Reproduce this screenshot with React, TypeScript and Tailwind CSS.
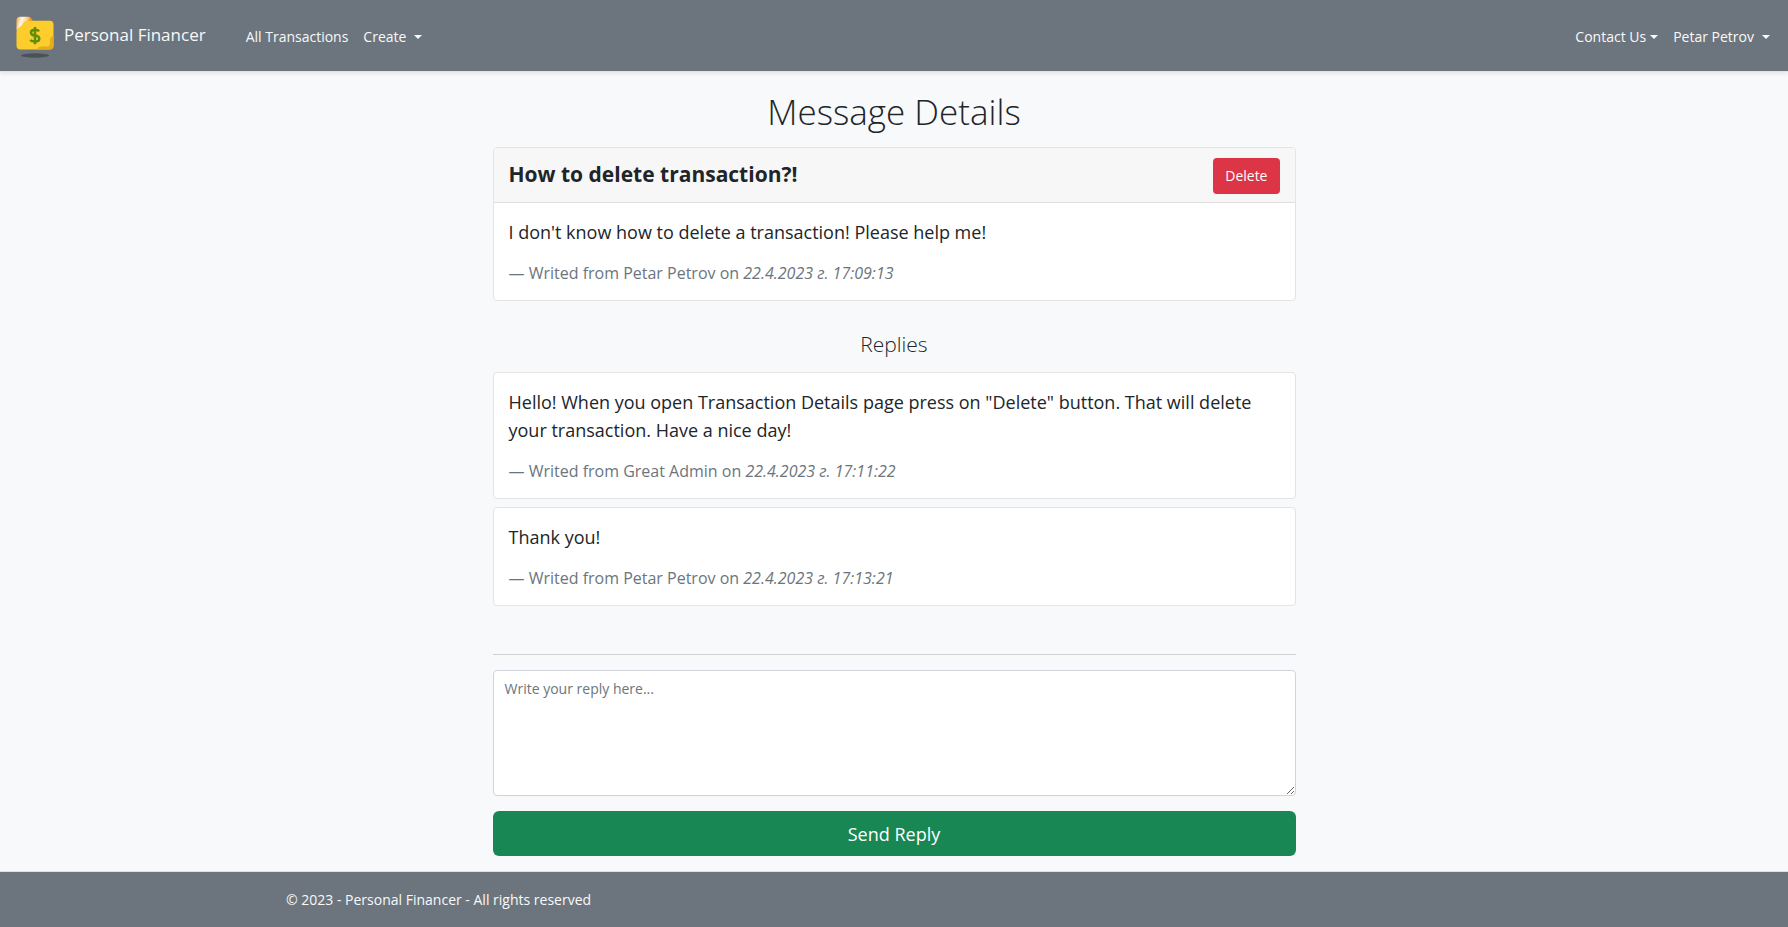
type Message = {
  id: number;
  content: string;
  author: string;
  createdOn: string;
};

const question: Message = {
  id: 1,
  content: "I don't know how to delete a transaction! Please help me!",
  author: 'Petar Petrov',
  createdOn: '22.4.2023 г. 17:09:13',
};

const replies: Message[] = [
  {
    id: 2,
    content:
      'Hello! When you open Transaction Details page press on "Delete" button. That will delete your transaction. Have a nice day!',
    author: 'Great Admin',
    createdOn: '22.4.2023 г. 17:11:22',
  },
  {
    id: 3,
    content: 'Thank you!',
    author: 'Petar Petrov',
    createdOn: '22.4.2023 г. 17:13:21',
  },
];

function Logo() {
  return (
    <svg className="h-[42px] w-[38px]" viewBox="0 0 38 42" aria-hidden="true">
      <defs>
        <linearGradient id="tab" x1="0" y1="0.1" x2="1" y2="0.3">
          <stop offset="0" stopColor="#fba43a" />
          <stop offset="0.3" stopColor="#fff6e6" />
          <stop offset="0.55" stopColor="#fdd9a4" />
          <stop offset="0.8" stopColor="#f98a1f" />
        </linearGradient>
      </defs>
      <ellipse cx="19" cy="39.500" rx="14" ry="2.200" fill="#4b5157" />
      <path d="M.5 4.500Q.5 .8 4 .8h8.200Q14.500 .8 15.800 3L18 8v6H.5Z" fill="url(#tab)" />
      <path
        d="M4.500 10.500Q6 9.500 7 7.500T11 4.800H34Q37.500 4.800 37.500 8.300V29.500Q37.500 33.500 33.500 33.500H4.500Q.5 33.500 .5 29.500V15Q1.500 11.500 4.500 10.500Z"
        fill="#fdcd2c"
      />
      <path d="M37.500 20V29.500Q37.500 33.500 33.500 33.500H21Q22 30.500 26 30.500H31Q34 30.500 34 27V24Q34 20.500 37.500 20Z" fill="#e6ac1c" />
      <path
        d="M23 15.300Q22 13.700 19 13.700Q15 13.700 15 16.500T19 19.500Q23.300 20 23.300 22.800T19 25.600Q15.500 25.600 14.300 24M19 11V28.300"
        fill="none"
        stroke="#5f8d09"
        strokeWidth="2.500"
      />
    </svg>
  );
}

function Caret() {
  return (
    <svg className="h-2 w-2" viewBox="0 0 8 8" aria-hidden="true">
      <path d="M0 2h8L4 6z" fill="currentColor" />
    </svg>
  );
}

function MessageBody({ message }: { message: Message }) {
  return (
    <blockquote className="p-[15px]">
      <p className="mb-[15px] text-lg leading-7">{message.content}</p>
      <footer className="text-base leading-6 text-[#6c757d]">
        — Writed from {message.author} on <cite>{message.createdOn}</cite>
      </footer>
    </blockquote>
  );
}

export default function App() {
  return (
    <div className="flex min-h-screen flex-col bg-[#f8f9fa] font-['Open_Sans','Noto_Sans',sans-serif] text-sm text-[#212529]">
      <nav className="flex items-center border-b border-[#dee2e6] bg-[#6c757d] px-4 pt-4 pb-[13px] text-[#f8f9fa] shadow-[0_2px_4px_rgba(0,0,0,0.075)]">
        <a href="#" className="flex items-center gap-[10px] text-[17px] leading-6">
          <Logo />
          <span className="pb-1">Personal Financer</span>
        </a>
        <div className="ml-10 flex items-center gap-[15px]">
          <a href="#">All Transactions</a>
          <button type="button" className="flex items-center gap-2">
            Create <Caret />
          </button>
        </div>
        <div className="ml-auto flex items-center gap-[15px] pr-[2px]">
          <button type="button" className="flex items-center gap-1">
            Contact Us <Caret />
          </button>
          <button type="button" className="flex items-center gap-2">
            Petar Petrov <Caret />
          </button>
        </div>
      </nav>

      <main className="mx-auto w-full max-w-[803px] grow pb-[15px]">
        <h1 className="mt-4 mb-[11px] text-center text-[35px] leading-12 font-light">Message Details</h1>

        <section className="overflow-hidden rounded border border-[#e2e4e6] bg-white">
          <div className="flex items-start justify-between border-b border-[#dfdfdf] bg-[#f7f7f7] px-[15px] pt-[10px] pb-2">
            <h2 className="text-[21px] leading-8 font-bold">How to delete transaction?!</h2>
            <button type="button" className="rounded bg-[#dc3545] px-3 py-2 text-sm leading-5 text-white">
              Delete
            </button>
          </div>
          <MessageBody message={question} />
        </section>

        <h3 className="mt-[27px] mb-3 text-center text-[21px] leading-8 font-light">Replies</h3>

        <div className="flex flex-col gap-2">
          {replies.map((reply) => (
            <section key={reply.id} className="rounded border border-[#e2e4e6] bg-white">
              <MessageBody message={reply} />
            </section>
          ))}
        </div>

        <hr className="mt-12 mb-[15px] border-[#cfd1d3]" />

        <form className="flex flex-col gap-[15px]" onSubmit={(e) => e.preventDefault()}>
          <textarea
            aria-label="Reply"
            placeholder="Write your reply here..."
            className="block h-[126px] w-full resize rounded border border-[#ced4da] bg-white px-[11px] py-[6px] text-sm leading-6 placeholder:text-[#6c757d]"
          />
          <button type="submit" className="h-[45px] rounded-md bg-[#198754] text-lg text-white">
            Send Reply
          </button>
        </form>
      </main>

      <footer className="border-t border-[#dee2e6] bg-[#6c757d] px-4 py-[18px] text-[#f8f9fa]">
        <p className="mx-auto max-w-[1216px] leading-5">© 2023 - Personal Financer - All rights reserved</p>
      </footer>
    </div>
  );
}
